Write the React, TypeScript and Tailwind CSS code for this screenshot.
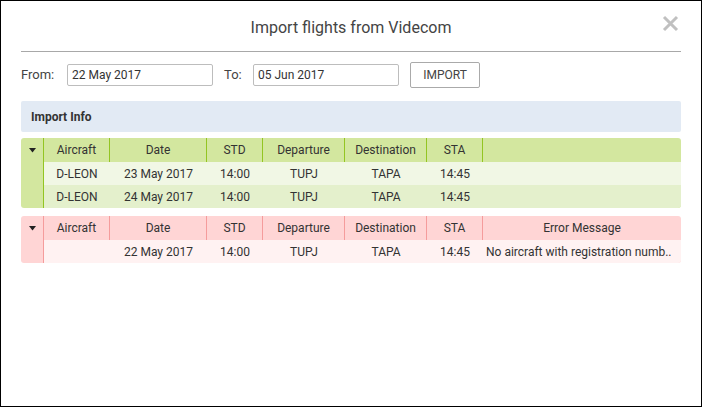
import React from 'react'

type Flight = {
  aircraft: string
  date: string
  std: string
  departure: string
  destination: string
  sta: string
  error?: string
}

const imported: Flight[] = [
  { aircraft: 'D-LEON', date: '23 May 2017', std: '14:00', departure: 'TUPJ', destination: 'TAPA', sta: '14:45' },
  { aircraft: 'D-LEON', date: '24 May 2017', std: '14:00', departure: 'TUPJ', destination: 'TAPA', sta: '14:45' },
]

// error text is shortened the same way the grid shows it
const failed: Flight[] = [
  {
    aircraft: '',
    date: '22 May 2017',
    std: '14:00',
    departure: 'TUPJ',
    destination: 'TAPA',
    sta: '14:45',
    error: 'No aircraft with registration numb..',
  },
]

const widths = ['w-[66px]', 'w-[97px]', 'w-[56px]', 'w-[82px]', 'w-[82px]', 'w-[56px]']
const labels = ['Aircraft', 'Date', 'STD', 'Departure', 'Destination', 'STA']

function Arrow() {
  return (
    <svg width="7" height="5" viewBox="0 0 7 5">
      <path d="M0 0 L7 0 L3.5 4.5 Z" fill="#222" />
    </svg>
  )
}

function FlightTable({ rows, variant }: { rows: Flight[]; variant: 'ok' | 'error' }) {
  const ok = variant === 'ok'
  const head = ok ? 'bg-[#d3e79f]' : 'bg-[#ffd5d5]'
  const line = ok ? 'border-[#93c522]' : 'border-[#f59c9c]'
  const rowBg = ok ? ['bg-[#f1f7e5]', 'bg-[#e4f0cc]'] : ['bg-[#fff2f2]', 'bg-[#fff2f2]']

  return (
    <div className={`flex rounded-[3px] overflow-hidden ${head}`}>
      <div className={`w-[23px] shrink-0 border-r ${line} flex justify-center pt-[10px]`}>
        <Arrow />
      </div>
      <div className="flex-1 min-w-0 flex flex-col">
        <div className="flex h-[24px] items-center">
          {labels.map((l, i) => (
            <div key={l} className={`${widths[i]} h-full shrink-0 border-r ${line} flex items-center justify-center`}>
              {l}
            </div>
          ))}
          <div className="flex-1 min-w-0 h-full flex items-center justify-center">{ok ? '' : 'Error Message'}</div>
        </div>
        {rows.map((r, idx) => (
          <div key={idx} className={`flex h-[23px] items-center ${rowBg[idx % 2]}`}>
            {[r.aircraft, r.date, r.std, r.departure, r.destination, r.sta].map((v, i) => (
              <div key={i} className={`${widths[i]} shrink-0 text-center`}>
                {v}
              </div>
            ))}
            <div className="flex-1 min-w-0 pl-[3px] whitespace-nowrap">{r.error}</div>
          </div>
        ))}
      </div>
    </div>
  )
}

export default function App() {
  return (
    <div
      className="w-[702px] h-[407px] border border-black bg-white text-[12px] text-[#333] px-[20px]"
      style={{ fontFamily: 'Roboto, "Liberation Sans", sans-serif' }}
    >
      {/* Header */}
      <div className="relative pt-[17px] pb-[13px] border-b border-[#a8a8a8]">
        <h1 className="text-center text-[16px] leading-[20px] text-[#444]">Import flights from Videcom</h1>
        <button className="absolute right-[2px] top-[14px] text-[#c0c0c0]">
          <svg width="17" height="17" viewBox="0 0 17 17">
            <path d="M2 2 L15 15 M15 2 L2 15" stroke="currentColor" strokeWidth="3" />
          </svg>
        </button>
      </div>

      {/* Date range */}
      <div className="flex items-center h-[26px] mt-[10px]">
        <span className="text-[13px] text-[#444] w-[46px]">From:</span>
        <input
          readOnly
          value="22 May 2017"
          className="w-[146px] h-[22px] border border-[#bdbdbd] rounded-[2px] px-[4px] text-[12px] text-[#333] outline-none"
        />
        <span className="text-[13px] text-[#444] ml-[11px] w-[29px]">To:</span>
        <input
          readOnly
          value="05 Jun 2017"
          className="w-[146px] h-[22px] border border-[#bdbdbd] rounded-[2px] px-[4px] text-[12px] text-[#333] outline-none"
        />
        <button className="ml-[11px] w-[70px] h-[26px] border border-[#aaa] rounded-[2px] text-[12px] text-[#444] bg-white">
          IMPORT
        </button>
      </div>

      {/* Import info */}
      <div className="mt-[13px] h-[31px] bg-[#e2eaf4] rounded-[2px] flex items-center pl-[10px] font-bold text-[12px] text-[#333]">
        Import Info
      </div>

      <div className="mt-[6px]">
        <FlightTable rows={imported} variant="ok" />
      </div>
      <div className="mt-[8px]">
        <FlightTable rows={failed} variant="error" />
      </div>
    </div>
  )
}
